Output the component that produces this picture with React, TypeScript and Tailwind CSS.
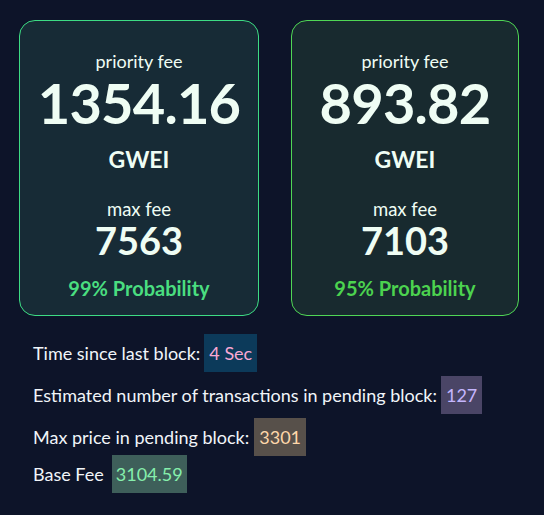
import React from "react";

const font = { fontFamily: '"Lato", "Noto Sans", sans-serif' };

function Card({
  fee,
  max,
  prob,
  width,
  border,
  bg,
  probColor,
}: {
  fee: string;
  max: string;
  prob: string;
  width: string;
  border: string;
  bg: string;
  probColor: string;
}) {
  return (
    <div
      className={`${width} ${border} ${bg} h-[296px] rounded-2xl border flex flex-col items-center text-[#effdf4] pt-[30px]`}
    >
      <div className="text-[18px] leading-5">priority fee</div>
      <div className="text-[56px] font-bold leading-none mt-[4px] tracking-[-0.8px]">{fee}</div>
      <div className="text-[23px] font-bold leading-7 mt-[14px]">GWEI</div>
      <div className="text-[18.5px] leading-5 mt-[26px]">max fee</div>
      <div className="text-[38px] font-bold leading-none mt-[2px]">{max}</div>
      <div className={`text-[20px] font-bold leading-7 mt-[15px] ${probColor}`}>{prob}</div>
    </div>
  );
}

export default function App() {
  return (
    <div className="min-h-[515px] bg-[#0d1429] pt-5 pl-[19px]" style={font}>
      <div className="flex gap-8">
        <Card
          fee="1354.16"
          max="7563"
          prob="99% Probability"
          width="w-[240px]"
          border="border-[#3ddc84]"
          bg="bg-[#172b36]"
          probColor="text-[#4ade80]"
        />
        <Card
          fee="893.82"
          max="7103"
          prob="95% Probability"
          width="w-[228px]"
          border="border-[#4fd655]"
          bg="bg-[#182a2f]"
          probColor="text-[#4cd34f]"
        />
      </div>
      <div className="pl-[14px] mt-[18px] text-[18px] text-[#f1f5f9]">
        <div className="flex items-center">
          <span>Time since last block:</span>
          <span className="ml-[4px] bg-[#0c3a5a] text-[#f9a8d4] px-[5px] py-[7px] leading-6">4 Sec</span>
        </div>
        <div className="flex items-center mt-[4px]">
          <span>Estimated number of transactions in pending block:</span>
          <span className="ml-[4px] bg-[#4a4566] text-[#c4b5fd] px-[5px] py-[7px] leading-6">127</span>
        </div>
        <div className="flex items-center mt-[4px]">
          <span>Max price in pending block:</span>
          <span className="ml-[5px] bg-[#57504a] text-[#fed7aa] px-[5px] py-[7px] leading-6">3301</span>
        </div>
        <div className="flex items-center mt-[-1px]">
          <span>Base Fee</span>
          <span className="ml-[8px] bg-[#3e5f5a] text-[#86efac] px-[4px] py-[7px] leading-6">3104.59</span>
        </div>
      </div>
    </div>
  );
}
